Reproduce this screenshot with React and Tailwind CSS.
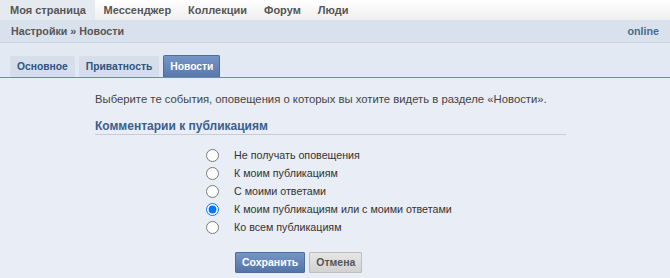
import React from 'react';

const navItems = ['Моя страница', 'Мессенджер', 'Коллекции', 'Форум', 'Люди'];
const tabs = ['Основное', 'Приватность', 'Новости'];
const options = [
  'Не получать оповещения',
  'К моим публикациям',
  'С моими ответами',
  'К моим публикациям или с моими ответами',
  'Ко всем публикациям',
];

const App = () => {
  return (
    <div className="w-[670px] h-[278px] overflow-hidden bg-[#e9edf5] font-['Liberation_Sans',Arial,sans-serif]">
      {/* Top nav */}
      <div className="flex h-5 bg-gradient-to-b from-white to-[#efefef] text-[11px] font-bold text-[#555] whitespace-nowrap">
        {navItems.map((item, idx) => (
          <div
            key={item}
            className={`flex items-center ${idx === 0 ? 'bg-[#e5eaf1] pl-[10px] w-[95px]' : 'px-[8.5px]'}`}
          >
            {item}
          </div>
        ))}
      </div>

      {/* Breadcrumb */}
      <div className="flex items-center justify-between h-[23px] bg-[#d9e1ec] border-b border-[#cbd5e2] px-[11px] text-[10.7px] font-bold">
        <span className="text-[#555]">Настройки » Новости</span>
        <span className="text-[#4a6a8e]">online</span>
      </div>

      {/* Tabs */}
      <div className="flex items-end gap-[4px] h-[35px] bg-[#e3e9f2] border-b border-[#6b8bb0] px-[10px] text-[10.3px] font-bold whitespace-nowrap">
        {tabs.map((tab, idx) =>
          idx === 2 ? (
            <div
              key={tab}
              className="flex items-center justify-center h-[22px] px-[6px] bg-gradient-to-b from-[#7695c7] to-[#5877ab] border border-b-0 border-[#4d6c9f] rounded-t-[2px] text-white"
            >
              {tab}
            </div>
          ) : (
            <div
              key={tab}
              className="flex items-center justify-center h-[21px] px-[7px] bg-[#d5dee9] rounded-t-[2px] text-[#2f5382]"
            >
              {tab}
            </div>
          )
        )}
      </div>

      {/* Content */}
      <div className="pl-[95px] pr-[104px] pt-[14px]">
        <p className="text-[11.3px] text-[#444] leading-[15px] whitespace-nowrap">
          Выберите те события, оповещения о которых вы хотите видеть в разделе «Новости».
        </p>
        <h3 className="mt-[12px] pb-[1px] border-b border-[#c8ccd4] text-[12px] leading-[14px] font-bold text-[#3a5f8c]">
          Комментарии к публикациям
        </h3>

        <div className="flex flex-col pl-[111px] pt-[11px] text-[10.7px] text-[#333]">
          {options.map((opt, idx) => (
            <label key={opt} className="flex items-center h-[18px]">
              <input
                type="radio"
                name="comments"
                defaultChecked={idx === 3}
                className="w-[13px] h-[13px] m-0 accent-[#0075ff]"
              />
              <span className="ml-[15px]">{opt}</span>
            </label>
          ))}
        </div>

        <div className="flex gap-[4px] pl-[140px] mt-[16px] text-[10.5px] font-bold">
          <button className="h-[21px] px-[6px] bg-gradient-to-b from-[#7695c7] to-[#5474a8] border border-[#4d6c9f] text-white rounded-[1px]">
            Сохранить
          </button>
          <button className="h-[21px] px-[6px] bg-gradient-to-b from-[#e6e6e6] to-[#d2d2d2] border border-[#bdbdbd] text-[#555] rounded-[1px]">
            Отмена
          </button>
        </div>
      </div>
    </div>
  );
};

export default App;
